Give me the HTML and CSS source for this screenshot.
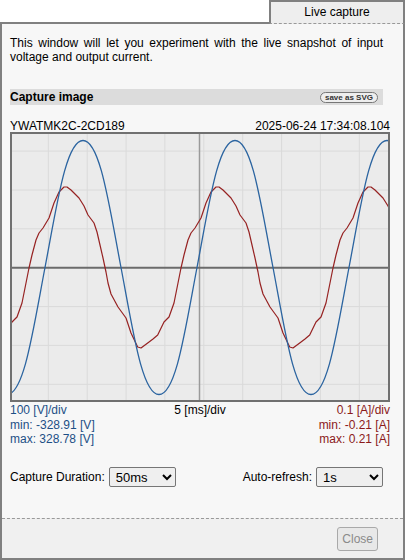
FILE: index.html
```html
<!DOCTYPE html>
<html>
<head>
<meta charset="utf-8">
<link rel="stylesheet" href="styles.css">
</head>
<body>
<div class="window">
  <div class="tabs">
    <div class="tab-fill"></div>
    <div class="tab">Live capture</div>
  </div>
  <div class="panel">
    <div class="panel-body">
      <p class="intro">This window will let you experiment with the live snapshot of input voltage and output current.</p>
      <div class="section-bar"><span class="section-title">Capture image</span><button class="pill">save as SVG</button></div>
      <div class="scope-head"><span>YWATMK2C-2CD189</span><span>2025-06-24 17:34:08.104</span></div>
      <svg class="scope" viewBox="10 132 380 270" xmlns="http://www.w3.org/2000/svg">
        <rect x="10" y="132" width="380" height="270" fill="#ebebeb"/>
        <g stroke="#dadada" stroke-width="1">
          <line x1="48.3" y1="132" x2="48.3" y2="402"/>
          <line x1="87.2" y1="132" x2="87.2" y2="402"/>
          <line x1="126.1" y1="132" x2="126.1" y2="402"/>
          <line x1="164.9" y1="132" x2="164.9" y2="402"/>
          <line x1="203.8" y1="132" x2="203.8" y2="402"/>
          <line x1="242.7" y1="132" x2="242.7" y2="402"/>
          <line x1="281.6" y1="132" x2="281.6" y2="402"/>
          <line x1="320.4" y1="132" x2="320.4" y2="402"/>
          <line x1="359.3" y1="132" x2="359.3" y2="402"/>
          <line x1="10" y1="151.1" x2="390" y2="151.1"/>
          <line x1="10" y1="190" x2="390" y2="190"/>
          <line x1="10" y1="228.8" x2="390" y2="228.8"/>
          <line x1="10" y1="306.6" x2="390" y2="306.6"/>
          <line x1="10" y1="345.4" x2="390" y2="345.4"/>
          <line x1="10" y1="384.3" x2="390" y2="384.3"/>
        </g>
        <line x1="199.5" y1="132" x2="199.5" y2="402" stroke="#9a9a9a" stroke-width="1.5"/>
        <line x1="10" y1="267.7" x2="390" y2="267.7" stroke="#6b6b6b" stroke-width="2"/>
        <polyline fill="none" stroke="#962222" stroke-width="1.2" stroke-linejoin="round" points="-34,307 -26,318 -21,333 -14.3,347 -11,348 -4.3,343 1,339 5.7,335 12,322 17,317 22,303 26,283 29,268 32,255 36,240 39,233 43,228 49,218 54,203 59,192 64,187 67,187 71,190 79,198 84,206 88,215 94,223 97,232 100,245 103,258 106,272 108,283 111,294 118,307 126,318 131,333 137.7,347 141,348 147.7,343 153,339 157.7,335 164,322 169,317 174,303 178,283 181,268 184,255 188,240 191,233 195,228 201,218 206,203 211,192 216,187 219,187 223,190 231,198 236,206 240,215 246,223 249,232 252,245 255,258 258,272 260,283 263,294 270,307 278,318 283,333 289.7,347 293,348 299.7,343 305,339 309.7,335 316,322 321,317 326,303 330,283 333,268 336,255 340,240 343,233 347,228 353,218 358,203 363,192 368,187 371,187 375,190 383,198 388,206 392,215 398,223"/>
        <path fill="none" stroke="#2b64a0" stroke-width="1.3" d="M7 394.5 C24 394.5 33 330.5 45 267.5 C57 204.5 66 140.5 83 140.5 C100 140.5 109 204.5 121 267.5 C133 330.5 142 394.5 159 394.5 C176 394.5 185 330.5 197 267.5 C209 204.5 218 140.5 235 140.5 C252 140.5 261 204.5 273 267.5 C285 330.5 294 394.5 311 394.5 C328 394.5 337 330.5 349 267.5 C361 204.5 370 140.5 387 140.5 C404 140.5 413 204.5 425 267.5"/>
        <rect x="11" y="133" width="378" height="268" fill="none" stroke="#707070" stroke-width="2"/>
      </svg>
      <div class="scale">
        <span class="v">100 [V]/div</span><span class="t">5 [ms]/div</span><span class="a">0.1 [A]/div</span>
        <span class="v">min: -328.91 [V]</span><span></span><span class="a">min: -0.21 [A]</span>
        <span class="v">max: 328.78 [V]</span><span></span><span class="a">max: 0.21 [A]</span>
      </div>
      <div class="controls">
        <label class="ctl">Capture Duration: <select class="sel"><option>50ms</option><option>100ms</option></select></label>
        <label class="ctl">Auto-refresh: <select class="sel"><option>1s</option><option>off</option></select></label>
      </div>
    </div>
    <div class="panel-foot"><button class="close" disabled>Close</button></div>
  </div>
</div>
</body>
</html>
```

FILE: styles.css
```css
* { box-sizing: border-box; }
html, body { margin: 0; padding: 0; }
body {
  background: #fff;
  font-family: "Liberation Sans", Arial, sans-serif;
  font-size: 12px;
  color: #000;
}
.window {
  width: 405px;
  height: 560px;
  display: flex;
  flex-direction: column;
}
.tabs {
  display: flex;
  height: 24px;
  flex: none;
}
.tab-fill {
  flex: 1;
  border-bottom: 2px solid #808080;
}
.tab {
  width: 136px;
  border: 2px solid #808080;
  border-bottom: 1px dashed #999;
  background: #eeeeee;
  text-align: center;
  padding-top: 1.5px;
  line-height: 16px;
}
.panel {
  flex: 1;
  display: flex;
  flex-direction: column;
  border: 2px solid #808080;
  border-top: none;
  background: #f7f7f7;
}
.panel-body {
  flex: 1;
  padding: 12px 20px 0 8px;
}
.intro {
  margin: 0;
  text-align: justify;
}
.section-bar {
  margin-top: 25px;
  height: 16px;
  line-height: 16px;
  background: #dcdcdc;
  display: flex;
  align-items: center;
  justify-content: space-between;
}
.section-title {
  font-weight: bold;
}
.pill {
  font-family: "Liberation Sans", Arial, sans-serif;
  font-weight: bold;
  font-size: 8px;
  line-height: 9px;
  height: 11px;
  padding: 0 4px;
  margin: 0 5px 0 0;
  border: 1px solid #777;
  border-radius: 6px;
  background: #eeeeee;
  color: #333;
}
.scope-head {
  width: 380px;
  margin-top: 15px;
  line-height: 12px;
  display: flex;
  justify-content: space-between;
}
.scope {
  display: block;
  width: 380px;
  height: 270px;
}
.scale {
  width: 380px;
  margin-top: 1px;
  display: grid;
  grid-template-columns: 1fr auto 1fr;
  line-height: 14.5px;
}
.v { color: #1d4f86; }
.t { text-align: center; }
.a { color: #8b1a1a; text-align: right; }
.controls {
  margin-top: 20.5px;
  height: 20px;
  display: flex;
  align-items: center;
  justify-content: space-between;
}
.ctl {
  display: flex;
  align-items: center;
  gap: 4px;
}
.sel {
  width: 67px;
  height: 20px;
  margin: 0;
  padding: 0 0 0 2px;
  font-family: "Liberation Sans", Arial, sans-serif;
  font-size: 13px;
  color: #000;
  background-color: #efefef;
  border: 1px solid #767676;
  border-radius: 2px;
}
.panel-foot {
  height: 40px;
  flex: none;
  border-top: 1px dashed #999;
  background: #f0f0f0;
  display: flex;
  justify-content: flex-end;
  align-items: center;
  padding-right: 25px;
}
.close {
  font-family: "Liberation Sans", Arial, sans-serif;
  font-size: 12px;
  line-height: 14px;
  height: 24px;
  padding: 4px 4px;
  margin: 0;
  color: #8a8a8a;
  background: #e8e8e8;
  border: 1px solid #a9a9a9;
  border-radius: 3px;
}
```
